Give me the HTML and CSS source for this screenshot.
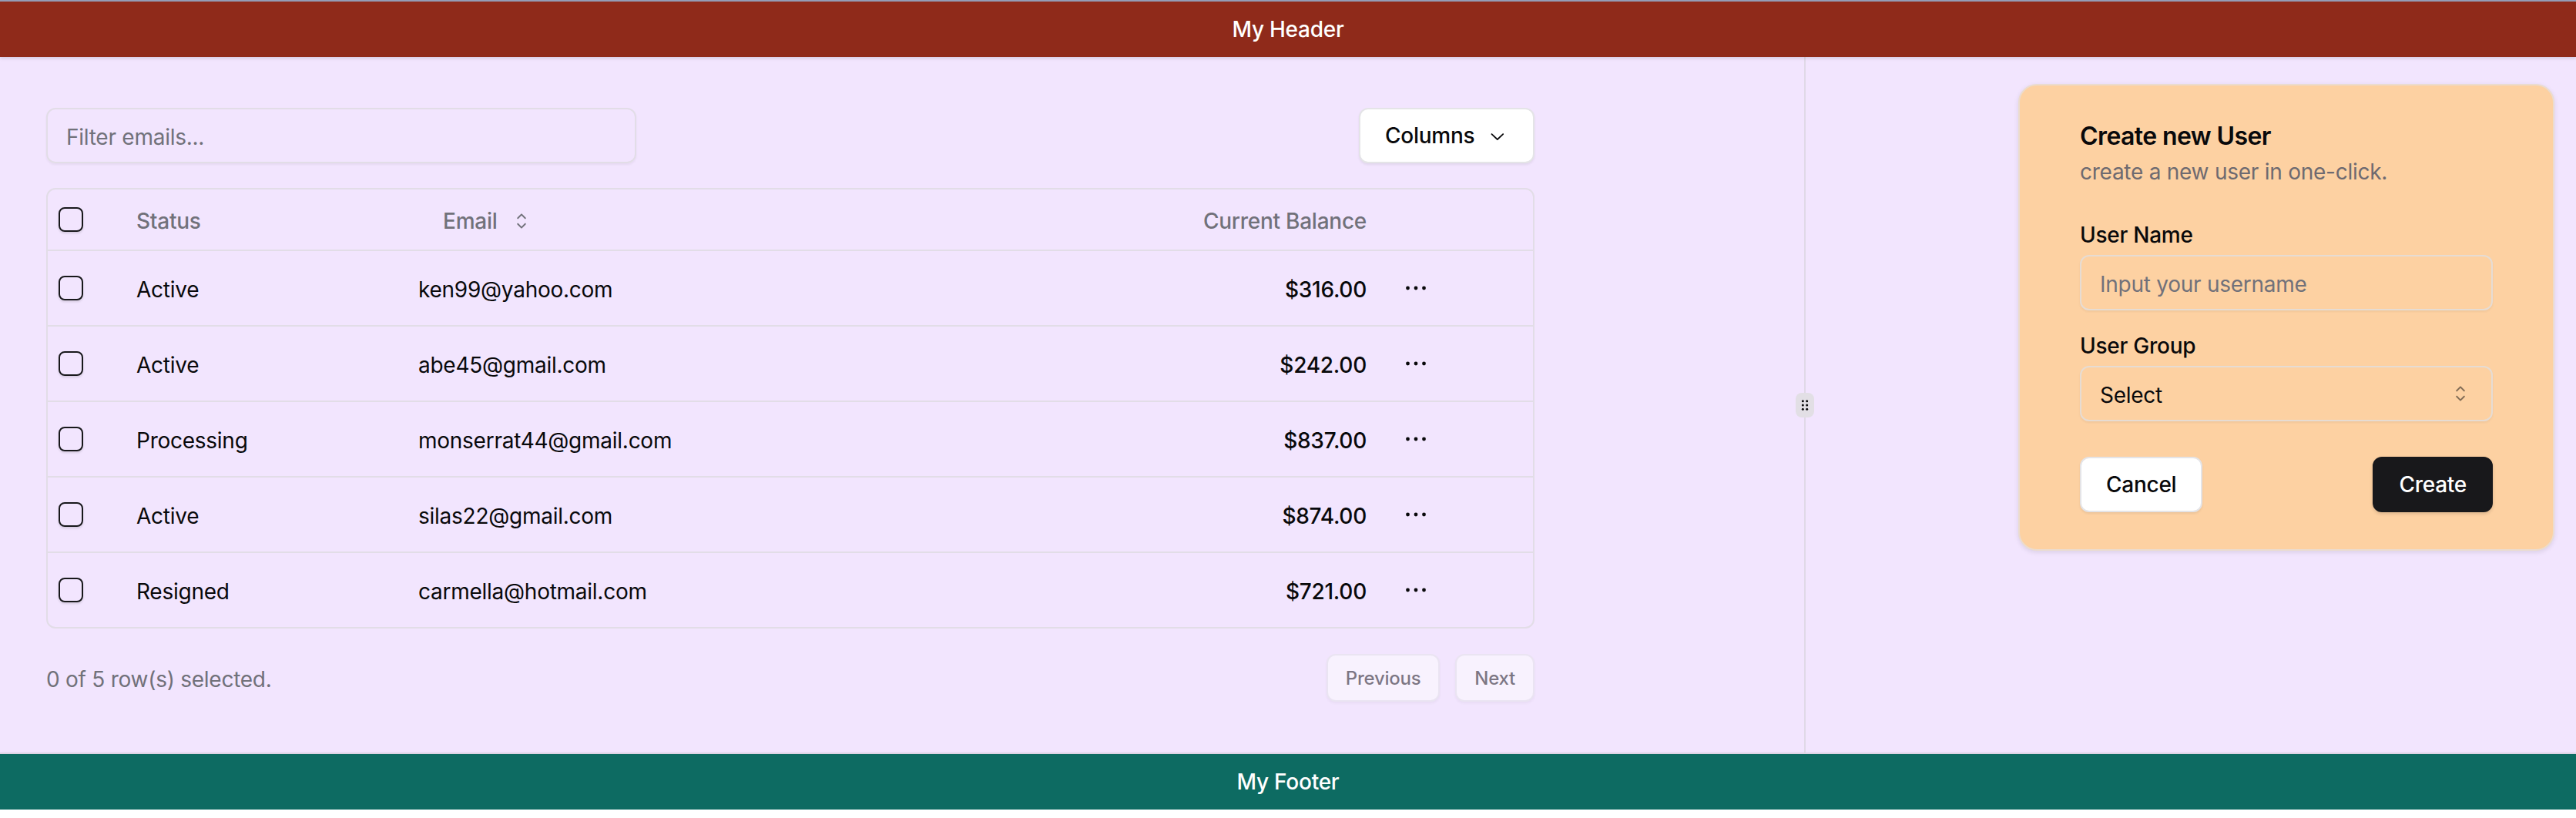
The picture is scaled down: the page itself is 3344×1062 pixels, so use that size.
FILE: index.html
```html
<!DOCTYPE html>
<html lang="en">
<head>
<meta charset="utf-8">
<title>Users</title>
<link rel="stylesheet" href="styles.css">
</head>
<body>
<div class="app">
  <header class="top">My Header</header>
  <main class="main">
    <section class="left">
      <div class="content">
        <div class="toolbar">
          <input class="filter" type="text" placeholder="Filter emails...">
          <button class="btn columns">Columns
            <svg class="ico ml" viewBox="0 0 15 15"><path fill="currentColor" fill-rule="evenodd" d="M3.13523 6.15803C3.3241 5.95657 3.64052 5.94637 3.84197 6.13523L7.5 9.56464L11.158 6.13523C11.3595 5.94637 11.6759 5.95657 11.8648 6.15803C12.0536 6.35949 12.0434 6.67591 11.842 6.86477L7.84197 10.6148C7.64964 10.7951 7.35036 10.7951 7.15803 10.6148L3.15803 6.86477C2.95657 6.67591 2.94637 6.35949 3.13523 6.15803Z"/></svg>
          </button>
        </div>
        <div class="table">
          <div class="row head">
            <div class="cell check"><span class="box"></span></div>
            <div class="cell">Status</div>
            <div class="cell"><span class="ghost">Email<svg class="ico ml" viewBox="0 0 15 15"><path fill="currentColor" fill-rule="evenodd" d="M4.93179 5.43179C4.75605 5.60753 4.75605 5.89245 4.93179 6.06819C5.10753 6.24392 5.39245 6.24392 5.56819 6.06819L7.49999 4.13638L9.43179 6.06819C9.60753 6.24392 9.89245 6.24392 10.0682 6.06819C10.2439 5.89245 10.2439 5.60753 10.0682 5.43179L7.81819 3.18179C7.73379 3.0974 7.61933 3.04999 7.49999 3.04999C7.38064 3.04999 7.26618 3.0974 7.18179 3.18179L4.93179 5.43179ZM10.0682 9.56819C10.2439 9.39245 10.2439 9.10753 10.0682 8.93179C9.89245 8.75606 9.60753 8.75606 9.43179 8.93179L7.49999 10.8636L5.56819 8.93179C5.39245 8.75606 5.10753 8.75606 4.93179 8.93179C4.75605 9.10753 4.75605 9.39245 4.93179 9.56819L7.18179 11.8182C7.35753 11.9939 7.64245 11.9939 7.81819 11.8182L10.0682 9.56819Z"/></svg></span></div>
            <div class="cell num">Current Balance</div>
            <div class="cell"></div>
          </div>
          <div class="row">
            <div class="cell check"><span class="box"></span></div>
            <div class="cell">Active</div>
            <div class="cell">ken99@yahoo.com</div>
            <div class="cell num">$316.00</div>
            <div class="cell"><span class="dots"><svg viewBox="0 0 32 32"><circle cx="5.5" cy="16" r="2.4"/><circle cx="16" cy="16" r="2.4"/><circle cx="26.5" cy="16" r="2.4"/></svg></span></div>
          </div>
          <div class="row">
            <div class="cell check"><span class="box"></span></div>
            <div class="cell">Active</div>
            <div class="cell">abe45@gmail.com</div>
            <div class="cell num">$242.00</div>
            <div class="cell"><span class="dots"><svg viewBox="0 0 32 32"><circle cx="5.5" cy="16" r="2.4"/><circle cx="16" cy="16" r="2.4"/><circle cx="26.5" cy="16" r="2.4"/></svg></span></div>
          </div>
          <div class="row">
            <div class="cell check"><span class="box"></span></div>
            <div class="cell">Processing</div>
            <div class="cell">monserrat44@gmail.com</div>
            <div class="cell num">$837.00</div>
            <div class="cell"><span class="dots"><svg viewBox="0 0 32 32"><circle cx="5.5" cy="16" r="2.4"/><circle cx="16" cy="16" r="2.4"/><circle cx="26.5" cy="16" r="2.4"/></svg></span></div>
          </div>
          <div class="row">
            <div class="cell check"><span class="box"></span></div>
            <div class="cell">Active</div>
            <div class="cell">silas22@gmail.com</div>
            <div class="cell num">$874.00</div>
            <div class="cell"><span class="dots"><svg viewBox="0 0 32 32"><circle cx="5.5" cy="16" r="2.4"/><circle cx="16" cy="16" r="2.4"/><circle cx="26.5" cy="16" r="2.4"/></svg></span></div>
          </div>
          <div class="row">
            <div class="cell check"><span class="box"></span></div>
            <div class="cell">Resigned</div>
            <div class="cell">carmella@hotmail.com</div>
            <div class="cell num">$721.00</div>
            <div class="cell"><span class="dots"><svg viewBox="0 0 32 32"><circle cx="5.5" cy="16" r="2.4"/><circle cx="16" cy="16" r="2.4"/><circle cx="26.5" cy="16" r="2.4"/></svg></span></div>
          </div>
        </div>
        <div class="pager">
          <div class="sel">0 of 5 row(s) selected.</div>
          <div class="pbtns">
            <button class="btn pbtn">Previous</button>
            <button class="btn pbtn">Next</button>
          </div>
        </div>
      </div>
    </section>
    <div class="divider">
      <div class="handle">
        <svg class="grip" viewBox="0 0 15 15"><circle cx="5.5" cy="3.5" r="1.125"/><circle cx="9.5" cy="3.5" r="1.125"/><circle cx="5.5" cy="7.5" r="1.125"/><circle cx="9.5" cy="7.5" r="1.125"/><circle cx="5.5" cy="11.5" r="1.125"/><circle cx="9.5" cy="11.5" r="1.125"/></svg>
      </div>
    </div>
    <section class="right">
      <div class="card">
        <div class="card-head">
          <h3 class="title">Create new User</h3>
          <p class="desc">create a new user in one-click.</p>
        </div>
        <div class="form">
          <div class="field">
            <label class="label">User Name</label>
            <input class="input" type="text" placeholder="Input your username">
          </div>
          <div class="field">
            <label class="label">User Group</label>
            <div class="input select"><span>Select</span>
              <svg class="ico faint" viewBox="0 0 15 15"><path fill="currentColor" fill-rule="evenodd" d="M4.93179 5.43179C4.75605 5.60753 4.75605 5.89245 4.93179 6.06819C5.10753 6.24392 5.39245 6.24392 5.56819 6.06819L7.49999 4.13638L9.43179 6.06819C9.60753 6.24392 9.89245 6.24392 10.0682 6.06819C10.2439 5.89245 10.2439 5.60753 10.0682 5.43179L7.81819 3.18179C7.73379 3.0974 7.61933 3.04999 7.49999 3.04999C7.38064 3.04999 7.26618 3.0974 7.18179 3.18179L4.93179 5.43179ZM10.0682 9.56819C10.2439 9.39245 10.2439 9.10753 10.0682 8.93179C9.89245 8.75606 9.60753 8.75606 9.43179 8.93179L7.49999 10.8636L5.56819 8.93179C5.39245 8.75606 5.10753 8.75606 4.93179 8.93179C4.75605 9.10753 4.75605 9.39245 4.93179 9.56819L7.18179 11.8182C7.35753 11.9939 7.64245 11.9939 7.81819 11.8182L10.0682 9.56819Z"/></svg>
            </div>
          </div>
        </div>
        <div class="card-foot">
          <button class="btn">Cancel</button>
          <button class="btn primary">Create</button>
        </div>
      </div>
    </section>
  </main>
  <footer class="bottom">My Footer</footer>
</div>
</body>
</html>
```

FILE: styles.css
```css
* { box-sizing: border-box; margin: 0; padding: 0; }
body {
  margin: 0; background: #fff; font-family: Inter, "Noto Sans", sans-serif; color: #09090b;
  letter-spacing: -0.016em;
}

.app { height: 1051px; display: flex; flex-direction: column; }

.top {
  flex: 0 0 74px; border-top: 2px solid #949cb6; background: #8f2a1a; color: #fff;
  font-size: 28px; font-weight: 500; display: flex; align-items: center; justify-content: center;
  box-shadow: 0 2px 4px rgba(0,0,0,.12); position: relative; z-index: 2;
}
.bottom {
  flex: 0 0 74px; border-top: 2px solid #ddd4e4; background: #0d6b62; color: #fff;
  font-size: 28px; font-weight: 500; display: flex; align-items: center; justify-content: center;
  box-shadow: 0 3px 6px rgba(0,0,0,.12); position: relative; z-index: 2;
}
.main { flex: 1; display: flex; background: #f2e5fe; min-height: 0; }

/* left */
.left { flex: 0 0 2342px; padding: 34px 0 0 60px; }
.content { width: 1932px; }
.toolbar { display: flex; justify-content: space-between; align-items: center; padding: 32px 0; }
.filter {
  width: 766px; height: 72px; border: 2px solid #e2dde7; border-radius: 12px; background: transparent;
  padding: 3px 24px 0; font-family: inherit; font-size: 28px; letter-spacing: inherit; color: #09090b; outline: none;
  box-shadow: 0 2px 3px rgba(0,0,0,.05);
}
.filter::placeholder { color: #71717a; }

.btn {
  display: inline-flex; align-items: center; justify-content: center; font-family: inherit;
  letter-spacing: inherit;
  font-size: 28px; font-weight: 500; height: 72px; padding: 0 32px; border-radius: 12px;
  border: 2px solid #e4e4e7; background: #fff; color: #09090b; box-shadow: 0 2px 3px rgba(0,0,0,.07);
}
.columns { width: 228px; }
.ico { width: 32px; height: 32px; display: block; }
.ml { margin-left: 16px; }
.faint { opacity: .5; }

.table { border: 2px solid #e2dde7; border-radius: 12px; overflow: hidden; }
.row {
  display: grid; grid-template-columns: 99px 366px 1fr 400px 200px; align-items: center;
  height: 98px; border-bottom: 2px solid #e2dde7;
}
.row.head { height: 80px; }
.row:last-child { border-bottom: none; height: 96px; }
.cell { padding: 4px 16px 0; font-size: 28px; line-height: 40px; white-space: nowrap; }
.cell.check { padding: 0 16px 0 14px; display: flex; align-items: center; }
.head .cell { color: #71717a; font-weight: 500; }
.cell.num { text-align: right; font-weight: 500; }
.box {
  display: block; width: 32px; height: 32px; border: 2px solid #18181b; border-radius: 8px;
  box-shadow: 0 2px 3px rgba(0,0,0,.12);
}
.ghost { display: inline-flex; align-items: center; height: 72px; padding: 0 32px; }
.dots { display: flex; align-items: center; justify-content: center; width: 64px; height: 64px; margin-top: -4px; }
.dots svg { width: 32px; height: 32px; fill: #09090b; }

.pager { display: flex; justify-content: space-between; align-items: center; padding: 33px 0; }
.sel { font-size: 28px; line-height: 40px; color: #71717a; padding-top: 3px; }
.pbtns { display: flex; gap: 20px; }
.pbtn { height: 62px; padding: 0 23px; font-size: 24px; opacity: .5; }

/* divider */
.divider {
  flex: 0 0 2px; background: #e0d9e7; position: relative;
  display: flex; align-items: center; justify-content: center;
}
.handle {
  position: absolute; width: 24px; height: 32px; border-radius: 8px; background: #e2dfe5;
  display: flex; align-items: center; justify-content: center; z-index: 1;
}
.grip { width: 20px; height: 20px; fill: #09090b; }

/* right */
.right { flex: 1; display: flex; justify-content: flex-end; align-items: flex-start; padding: 35px 28px 0 0; }
.card {
  width: 696px; background: #fdd1a2; border: 2px solid #ebdccf; border-radius: 24px;
  box-shadow: 0 2px 6px rgba(0,0,0,.1); padding: 50px 78px 48px;
}
.card-head { display: flex; flex-direction: column; gap: 10px; }
.title { font-size: 32px; line-height: 32px; font-weight: 600; letter-spacing: -0.6px; }
.desc { font-size: 28px; line-height: 40px; color: #6e6a70; }
.form { margin-top: 48px; display: flex; flex-direction: column; gap: 32px; }
.field { display: flex; flex-direction: column; gap: 12px; }
.label { font-size: 28px; line-height: 28px; font-weight: 500; }
.input {
  height: 72px; border: 2px solid #e6dcd3; border-radius: 12px; background: transparent;
  padding: 3px 24px 0; font-family: inherit; font-size: 28px; letter-spacing: inherit; color: #09090b; outline: none;
  box-shadow: 0 2px 3px rgba(0,0,0,.05); width: 100%;
}
.input::placeholder { color: #71717a; }
.select { display: flex; align-items: center; justify-content: space-between; padding-top: 0; }
.select span { padding-top: 3px; }
.card-foot { margin-top: 46px; display: flex; justify-content: space-between; }
.primary { background: #18181b; border-color: #18181b; color: #fff; box-shadow: 0 2px 4px rgba(0,0,0,.15); }
```
